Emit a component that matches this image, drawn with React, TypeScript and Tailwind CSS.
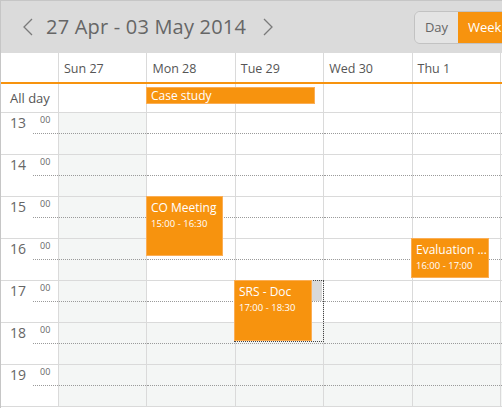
import React from "react";

const days = ["Sun 27", "Mon 28", "Tue 29", "Wed 30", "Thu 1", "", ""];
const hours = [13, 14, 15, 16, 17, 18, 19];

function Chevron({ dir }: { dir: "left" | "right" }) {
  return (
    <svg width="12" height="18" viewBox="0 0 12 18" className="shrink-0">
      <path
        d={dir === "left" ? "M10 1 L2 9 L10 17" : "M2 1 L10 9 L2 17"}
        fill="none"
        stroke="#7a7a7a"
        strokeWidth="1.3"
      />
    </svg>
  );
}

function Event({ title, time, className }: { title: string; time: string; className: string }) {
  return (
    <div
      className={`absolute bg-[#f7930e] border border-[#fbae55] text-white px-[4px] pt-[2px] overflow-hidden ${className}`}
    >
      <div className="text-[12px] leading-[17px] whitespace-nowrap">{title}</div>
      <div className="text-[9.5px] leading-[16px] whitespace-nowrap">{time}</div>
    </div>
  );
}

export default function App() {
  return (
    <div className="w-[502px] h-[408px] overflow-hidden bg-white border-l border-t border-[#c6c6c6] font-['Open_Sans',sans-serif] text-[#555]">
      {/* toolbar */}
      <div className="h-[52px] bg-[#dbdbdb] flex items-center relative">
        <div className="flex items-center pl-[21px] gap-[12px]">
          <Chevron dir="left" />
          <span className="text-[20px] tracking-[0.2px] text-[#666] leading-none">27 Apr - 03 May 2014</span>
          <span className="ml-[4px]">
            <Chevron dir="right" />
          </span>
        </div>
        <div className="absolute left-[413px] top-[10px] flex h-[33px] border border-[#c2c2c2] rounded-l-[6px] overflow-hidden">
          <div className="w-[43px] bg-[#e4e4e4] text-[13px] text-[#666] flex items-center justify-center">Day</div>
          <div className="w-[60px] bg-[#f7930e] text-[13px] text-white flex items-center pl-[10px]">Week</div>
        </div>
      </div>

      <div className="w-[680px]">
        {/* header */}
        <div className="flex h-[31px] border-b-[2px] border-[#f7930e]">
          <div className="w-[58px] shrink-0 border-r border-[#dadada]" />
          {days.map((d, i) => (
            <div
              key={i}
              className="w-[88.4px] shrink-0 border-r border-[#dadada] pl-[5px] pt-[7px] text-[12.5px] text-[#555] whitespace-nowrap"
            >
              {d}
            </div>
          ))}
        </div>

        {/* all day */}
        <div className="flex h-[29px] border-b border-[#dadada] relative">
          <div className="w-[58px] shrink-0 border-r border-[#dadada] pl-[9px] pt-[5px] text-[13px] text-[#555]">
            All day
          </div>
          {days.map((_, i) => (
            <div key={i} className="w-[88.4px] shrink-0 border-r border-[#dadada]" />
          ))}
          <div className="absolute left-[145px] top-[3px] w-[169px] h-[17px] bg-[#f7930e] border border-[#fbae55] text-white text-[12px] leading-[15px] pl-[4px]">
            Case study
          </div>
        </div>

        {/* hours */}
        <div className="relative">
          {hours.map((h) => (
            <div key={h} className="flex h-[42px] border-b border-[#dadada]">
              <div className="w-[58px] shrink-0 border-r border-[#dadada] flex flex-col">
                <div className="h-[21px] flex items-start border-b border-dotted border-[#9a9a9a] ml-[32px] relative">
                  <span className="absolute left-[-23px] top-[3px] text-[14px] text-[#666] leading-none">{h}</span>
                  <span className="pl-[7px] pt-[2px] text-[9px] text-[#666] leading-none">00</span>
                </div>
              </div>
              {days.map((_, i) => {
                const gray = i === 0 || i === 6 || h >= 18;
                return (
                  <div
                    key={i}
                    className={`w-[88.4px] shrink-0 border-r border-[#dadada] ${gray ? "bg-[#f4f6f5]" : "bg-white"}`}
                  >
                    <div className="h-[21px] border-b border-dotted border-[#9a9a9a]" />
                  </div>
                );
              })}
            </div>
          ))}

          {/* selected slot + focus */}
          <div className="absolute left-[234px] top-[168px] w-[87px] h-[20px] bg-[#d9d9d9]" />
          <div className="absolute left-[233px] top-[167px] w-[90px] h-[62px] border border-dotted border-[#444]" />

          <Event title="CO Meeting" time="15:00 - 16:30" className="left-[145px] top-[83px] w-[77px] h-[60px]" />
          <Event title="Evaluation ..." time="16:00 - 17:00" className="left-[410px] top-[125px] w-[78px] h-[40px]" />
          <Event title="SRS - Doc" time="17:00 - 18:30" className="left-[233px] top-[167px] w-[78px] h-[61px]" />
        </div>
      </div>
    </div>
  );
}
